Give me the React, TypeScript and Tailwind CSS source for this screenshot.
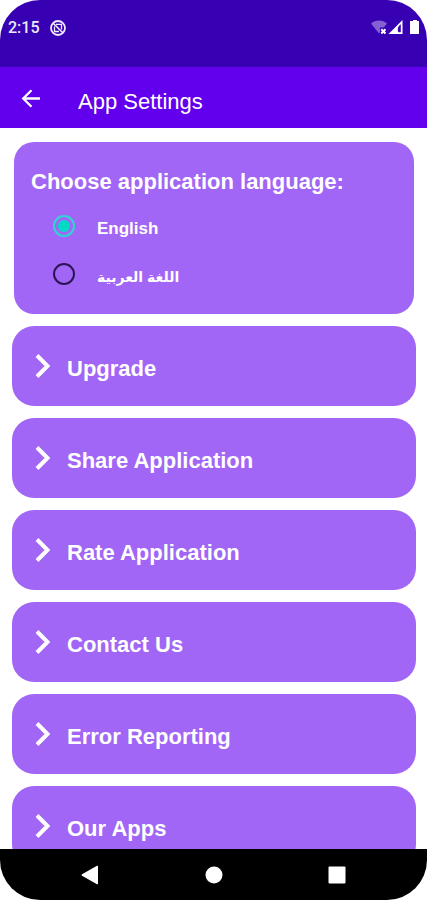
import { useState } from "react";

const menuItems = [
  "Upgrade",
  "Share Application",
  "Rate Application",
  "Contact Us",
  "Error Reporting",
  "Our Apps",
];

function StatusBar() {
  return (
    <div className="flex h-[67px] shrink-0 items-start justify-between bg-[#3700b3] px-2 pt-[18px] text-[#efe9fc]">
      <div className="flex items-center gap-2.5">
        <span className="font-[Roboto,sans-serif] text-base leading-5 font-medium">2:15</span>
        <svg className="size-4" viewBox="0 0 16 16" fill="none" stroke="currentColor">
          <circle cx="8" cy="8" r="7" strokeWidth="1.800" />
          <path d="M6 4.300H11.500V9.500M4.500 6.500V11.500H9" strokeWidth="1.300" />
          <path d="M3.200 3.200 12.800 12.800" strokeWidth="1.600" />
        </svg>
      </div>
      <svg className="mt-px h-4 w-12" viewBox="0 0 48 16">
        <path d="M0 4.500C4 .5 12 .5 16 4.500L8 14.500Z" fill="#8560d2" />
        <path d="M9 8.500h6v6.500h-6z" fill="#3700b3" />
        <path d="M10.300 10.300 14.500 14.500M14.500 10.300 10.300 14.500" stroke="#fff" strokeWidth="2" />
        <path fillRule="evenodd" d="M31.500 1V15H17.500ZM29.800 5.200C27 7 26 10.500 27.500 13.300H29.800Z" fill="#fff" />
        <path d="M40 2h2V1h4v1h2v13h-9V2Z" fill="#fff" />
      </svg>
    </div>
  );
}

function AppBar() {
  return (
    <header className="flex h-[61px] shrink-0 items-center gap-[35px] bg-[#6200ee] px-[19px] text-white">
      <button type="button" aria-label="Back">
        <svg className="size-6" viewBox="0 0 24 24" fill="none" stroke="currentColor" strokeWidth="2.300">
          <path d="M21 12.500H4.500M12.500 4.200 4.200 12.500l8.300 8.300" />
        </svg>
      </button>
      <h1 className="pt-2 text-[22px] leading-7">App Settings</h1>
    </header>
  );
}

type LanguageOptionProps = {
  value: string;
  label: string;
  checked: boolean;
  onSelect: (value: string) => void;
};

function LanguageOption({ value, label, checked, onSelect }: LanguageOptionProps) {
  return (
    <label className="flex h-12 items-center gap-[22px]">
      <input
        type="radio"
        name="language"
        value={value}
        checked={checked}
        onChange={() => onSelect(value)}
        className="size-[22px] shrink-0 appearance-none rounded-full border-2 border-[#2b1457] bg-clip-content p-[3px] checked:border-[#2fd5d3] checked:bg-[#03dac5]"
      />
      <span lang={value} className="pt-1.5 text-[17px] leading-6 font-bold [&:lang(ar)]:text-[14px]">
        {label}
      </span>
    </label>
  );
}

function NavigationBar() {
  return (
    <nav className="flex h-[51px] shrink-0 items-center justify-between bg-black px-20 text-white">
      <button type="button" aria-label="Back">
        <svg className="size-5" viewBox="0 0 20 20" fill="currentColor">
          <path d="M17 .8q1-.4 1 .8v16.8q0 1.200-1 .8L2 10.700q-1-.7 0-1.400Z" />
        </svg>
      </button>
      <button type="button" aria-label="Home">
        <svg className="size-5" viewBox="0 0 20 20" fill="currentColor">
          <circle cx="10" cy="10" r="8.500" />
        </svg>
      </button>
      <button type="button" aria-label="Recent apps">
        <svg className="size-5" viewBox="0 0 20 20" fill="currentColor">
          <rect x="1.500" y="1.500" width="17" height="17" rx="1" />
        </svg>
      </button>
    </nav>
  );
}

export default function App() {
  const [language, setLanguage] = useState("en");

  return (
    <div className="flex h-screen flex-col overflow-hidden rounded-[40px] bg-white font-['Liberation_Sans','DejaVu_Sans',sans-serif]">
      <StatusBar />
      <AppBar />
      <main className="flex min-h-0 flex-1 flex-col gap-3 overflow-hidden pt-[14px] pr-[11px] pl-3 text-white">
        <fieldset className="mx-0.5 shrink-0 rounded-[20px] bg-[#a166f5] px-[17px] pt-6 pb-4">
          <legend className="float-left mb-1 w-full text-[22px] leading-8 font-bold">
            Choose application language:
          </legend>
          <div className="clear-both pl-[22px]">
            <LanguageOption value="en" label="English" checked={language === "en"} onSelect={setLanguage} />
            <LanguageOption value="ar" label="اللغة العربية" checked={language === "ar"} onSelect={setLanguage} />
          </div>
        </fieldset>
        {menuItems.map((item) => (
          <button
            key={item}
            type="button"
            className="flex h-20 shrink-0 items-center gap-4 rounded-[22px] bg-[#a166f5] pr-6 pl-[23px] text-left"
          >
            <svg className="h-6 w-4" viewBox="0 0 16 24" fill="none" stroke="currentColor" strokeWidth="4">
              <path d="M2 1.500 12.500 12 2 22.500" />
            </svg>
            <span className="pt-1.5 text-[22px] leading-8 font-bold">{item}</span>
          </button>
        ))}
      </main>
      <NavigationBar />
    </div>
  );
}
